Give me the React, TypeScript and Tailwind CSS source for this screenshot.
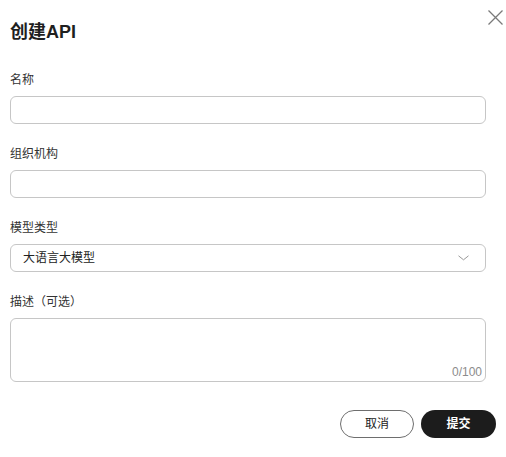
import React from "react";

const font = "font-['Liberation_Sans','Noto_Sans_CJK_SC',sans-serif]";

function Label({ children }: { children: React.ReactNode }) {
  return <div className="text-[12px] leading-[16px] text-[#333333]">{children}</div>;
}

function Field({ label, children }: { label: string; children: React.ReactNode }) {
  return (
    <div className="flex flex-col gap-[8px]">
      <Label>{label}</Label>
      {children}
    </div>
  );
}

export default function App() {
  return (
    <div className={`relative w-[506px] h-[457px] bg-white pl-[10px] pr-[10px] pt-[20px] ${font}`}>
      <button className="absolute top-[9px] right-[2px] w-[17px] h-[17px] flex items-center justify-center">
        <svg width="17" height="17" viewBox="0 0 17 17" fill="none">
          <path d="M1.5 1.5 L15.5 15.5 M15.5 1.5 L1.5 15.5" stroke="#7a7a7a" strokeWidth="1.3" />
        </svg>
      </button>
      <h1 className="text-[18px] leading-[24px] font-bold text-[#1f1f1f]">创建API</h1>
      <div className="mt-[28px] w-[476px] flex flex-col gap-[22px]">
        <Field label="名称">
          <div className="h-[28px] rounded-[6px] border border-[#c6c6c6]" />
        </Field>
        <Field label="组织机构">
          <div className="h-[28px] rounded-[6px] border border-[#c6c6c6]" />
        </Field>
        <Field label="模型类型">
          <div className="h-[28px] rounded-[6px] border border-[#c6c6c6] flex items-center justify-between pl-[12px] pr-[16px]">
            <span className="text-[12px] leading-[16px] text-[#222222]">大语言大模型</span>
            <svg width="11" height="6" viewBox="0 0 11 6" fill="none">
              <path d="M0.5 0.8 L5.5 4.8 L10.5 0.8" stroke="#999999" strokeWidth="1" />
            </svg>
          </div>
        </Field>
        <Field label="描述（可选）">
          <div className="relative h-[64px] rounded-[6px] border border-[#c6c6c6]">
            <span className="absolute right-[3px] bottom-[2px] text-[12px] leading-[14px] text-[#8c8c8c]">0/100</span>
          </div>
        </Field>
      </div>
      <div className="mt-[28px] flex justify-end gap-[7px]">
        <button className="w-[74px] h-[28px] rounded-full border border-[#6e6e6e] bg-white text-[12px] text-[#222222] flex items-center justify-center">
          取消
        </button>
        <button className="w-[75px] h-[28px] rounded-full bg-[#1c1c1c] text-[12px] text-white font-bold flex items-center justify-center">
          提交
        </button>
      </div>
    </div>
  );
}
